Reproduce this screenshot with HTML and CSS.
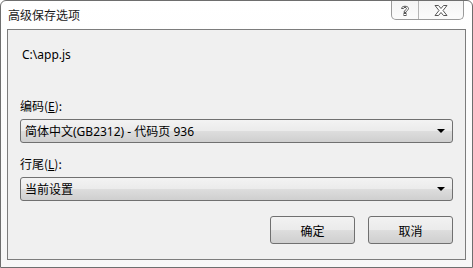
FILE: index.html
```html
<!DOCTYPE html>
<html lang="zh-CN">
<head>
    <meta charset="UTF-8">
    <title>高级保存选项</title>
    <link rel="stylesheet" href="styles.css">
</head>
<body>
    <div class="window">
        <div class="titlebar">
            <div class="title">高级保存选项</div>
            <div class="caption-buttons">
                <div class="cap-btn help">
                    <svg width="12" height="13" viewBox="0 0 12 13">
                        <path d="M2.5 4.5 C2.5 1.5 9.5 1.5 9.5 4.5 C9.5 6.5 7 6.5 7 8.5 L5 8.5 C5 6 7.5 6 7.5 4.5 C7.5 3 4.5 3 4.5 4.5 Z" fill="#fff" stroke="#555" stroke-width="1"/>
                        <rect x="5" y="9.5" width="2" height="2" fill="#fff" stroke="#555" stroke-width="1"/>
                    </svg>
                </div>
                <div class="cap-btn close">
                    <svg width="16" height="13" viewBox="0 0 16 13">
                        <path d="M2 1.5 H5.5 L8 4.5 L10.5 1.5 H14 L10 6.5 L14 11.5 H10.5 L8 8.5 L5.5 11.5 H2 L6 6.5 Z" fill="#fff" stroke="#555" stroke-width="1" stroke-linejoin="round"/>
                    </svg>
                </div>
            </div>
        </div>

        <div class="client">
            <div class="path">C:\app.js</div>

            <div class="field">
                <div class="label">编码(<u>E</u>):</div>
                <div class="combo">
                    <span>简体中文(GB2312) - 代码页 936</span>
                    <span class="arrow"></span>
                </div>
            </div>

            <div class="field">
                <div class="label">行尾(<u>L</u>):</div>
                <div class="combo">
                    <span>当前设置</span>
                    <span class="arrow"></span>
                </div>
            </div>

            <div class="actions">
                <button class="btn">确定</button>
                <button class="btn">取消</button>
            </div>
        </div>
    </div>
</body>
</html>
```

FILE: styles.css
```css
body {
    margin: 0;
    font-family: "Noto Sans", "Noto Sans CJK SC", sans-serif;
    font-size: 12px;
    color: #000000;
    background-color: #ffffff;
}

.window {
    width: 473px;
    height: 268px;
    box-sizing: border-box;
    border: 1px solid #6e6e6e;
    border-radius: 6px 6px 0 0;
    background: linear-gradient(to bottom, #ffffff 0%, #f7f7f7 100%);
    display: flex;
    flex-direction: column;
    padding: 0 6px 7px 6px;
}

.titlebar {
    height: 28px;
    display: flex;
    justify-content: space-between;
    align-items: flex-start;
}

.title {
    font-family: "Noto Sans CJK SC", sans-serif;
    font-size: 12px;
    margin-top: 5px;
    margin-left: 1px;
    color: #1a1a1a;
}

.caption-buttons {
    display: flex;
    margin-right: 2px;
    border: 1px solid #9a9a9a;
    border-top: none;
    border-radius: 0 0 5px 5px;
    height: 18px;
    overflow: hidden;
    background: linear-gradient(to bottom, #f4f4f4, #fbfbfb);
}

.cap-btn {
    display: flex;
    align-items: center;
    justify-content: center;
}

.cap-btn.help {
    width: 26px;
    border-right: 1px solid #b5b5b5;
}

.cap-btn.close {
    width: 44px;
}

.client {
    flex: 1;
    background-color: #f0f0f0;
    border: 1px solid #7c7c7c;
    padding: 16px 12px 0 12px;
    display: flex;
    flex-direction: column;
}

.path {
    margin-left: 2px;
    height: 18px;
    line-height: 18px;
    margin-bottom: 33px;
}

.field {
    display: flex;
    flex-direction: column;
    margin-bottom: 12px;
}

.label {
    font-family: "Noto Sans CJK SC", sans-serif;
    height: 17px;
    line-height: 17px;
    margin-bottom: 5px;
}

.label u {
    font-family: "Noto Sans", sans-serif;
}

.combo {
    height: 22px;
    border: 1px solid #707070;
    border-radius: 3px;
    background: linear-gradient(to bottom, #f3f3f3 0%, #ebebeb 48%, #dddddd 52%, #cfcfcf 100%);
    display: flex;
    align-items: center;
    justify-content: space-between;
    padding: 0 6px 0 4px;
    font-family: "Noto Sans", "Noto Sans CJK SC", sans-serif;
}

.arrow {
    width: 0;
    height: 0;
    border-left: 4px solid transparent;
    border-right: 4px solid transparent;
    border-top: 4px solid #000000;
    margin-right: 1px;
}

.actions {
    display: flex;
    justify-content: flex-end;
    gap: 13px;
    margin-top: 3px;
}

.btn {
    width: 85px;
    height: 28px;
    border: 1px solid #707070;
    border-radius: 3px;
    background: linear-gradient(to bottom, #f2f2f2 0%, #ebebeb 48%, #dddddd 52%, #cfcfcf 100%);
    font-family: "Noto Sans CJK SC", sans-serif;
    font-size: 12px;
    color: #000000;
    padding: 0;
}
```
